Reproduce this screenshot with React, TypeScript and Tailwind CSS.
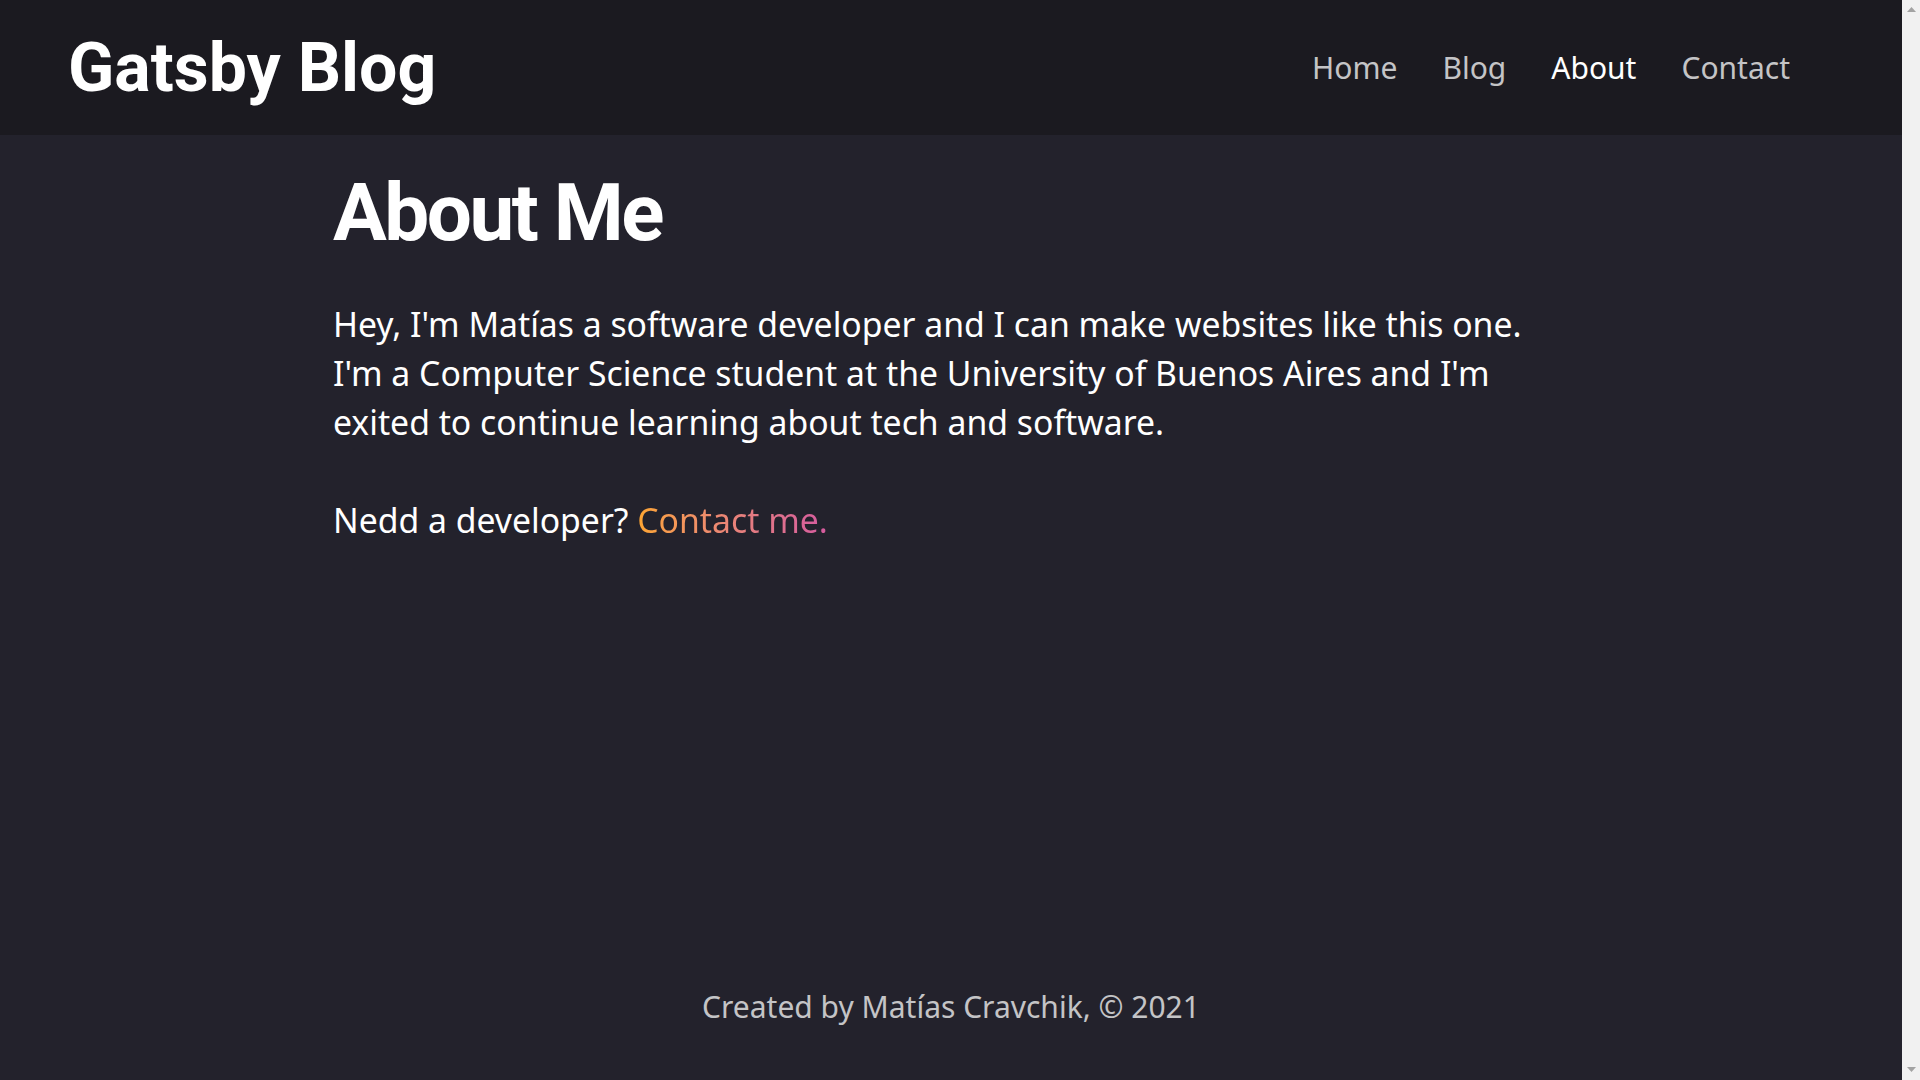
import React from 'react';

const links = ['Home', 'Blog', 'About', 'Contact'];

const ScrollArrow: React.FC<{ down?: boolean }> = ({ down }) => (
  <svg width="9" height="5" viewBox="0 0 9 5" className={down ? 'rotate-180' : ''}>
    <polygon points="4.5,0 9,5 0,5" fill="#a3a3a3" />
  </svg>
);

const App: React.FC = () => {
  return (
    <div className="h-screen flex bg-[#23222c] font-['Noto_Sans',sans-serif]">
      <div className="flex-1 min-w-0 flex flex-col">
        {/* Header */}
        <header className="h-[135px] shrink-0 bg-[#1b1a20] flex items-center justify-between pl-[68px] pr-[112px]">
          <h1 className="font-['Roboto',sans-serif] font-bold text-[68px] text-white">Gatsby Blog</h1>
          <nav className="flex items-center gap-[45px]">
            {links.map((link) => (
              <a
                key={link}
                href="#"
                className={`text-[30px] ${link === 'About' ? 'text-white' : 'text-[#c4c4c6]'}`}
              >
                {link}
              </a>
            ))}
          </nav>
        </header>

        {/* Content */}
        <main className="flex-1 w-[1236px] mx-auto">
          <h2 className="mt-[38px] font-['Roboto',sans-serif] font-bold text-[80px] tracking-[-2.5px] leading-none text-white">
            About Me
          </h2>
          <p className="mt-[47px] text-[33.75px] leading-[49px] text-white">
            Hey, I'm Matías a software developer and I can make websites like this one. I'm a Computer
            Science student at the University of Buenos Aires and I'm exited to continue learning about
            tech and software.
          </p>
          <p className="mt-[49px] text-[33.75px] leading-[49px] text-white">
            Nedd a developer?{' '}
            <a href="#" className="bg-gradient-to-r from-[#fda52f] to-[#d55a9f] bg-clip-text text-transparent">
              Contact me.
            </a>
          </p>
        </main>

        {/* Footer */}
        <footer className="pb-[51px] text-center text-[30px] text-[#c4c4c6]">
          Created by Matías Cravchik, © 2021
        </footer>
      </div>

      {/* Scrollbar */}
      <div className="w-[18px] shrink-0 bg-[#f1f1f1] flex flex-col items-center justify-between pt-[7px] pb-[8px]">
        <ScrollArrow />
        <ScrollArrow down />
      </div>
    </div>
  );
};

export default App;
